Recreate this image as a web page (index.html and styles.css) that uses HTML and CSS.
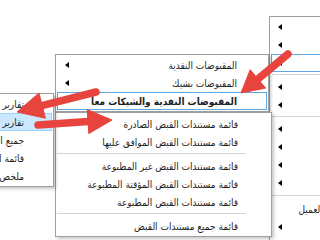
FILE: index.html
```html
<!DOCTYPE html>
<html lang="ar">
<head>
<meta charset="utf-8">
<title>قوائم التقارير</title>
<link rel="stylesheet" href="styles.css">
</head>
<body>
<div class="menu menu-main" dir="rtl">
  <div class="item"><span class="label">سندات</span><span class="sub"></span></div>
  <div class="item"><span class="label">الشيكات</span><span class="sub"></span></div>
  <div class="item focus"><span class="label">المقبوضات</span><span class="sub"></span></div>
  <div class="sep"></div>
  <div class="item"><span class="label">المدفوعات</span><span class="sub"></span></div>
  <div class="item"><span class="label">الحسابات</span><span class="sub"></span></div>
  <div class="sep"></div>
  <div class="item"><span class="label">العملاء</span><span class="sub"></span></div>
  <div class="item"><span class="label">الموردين</span><span class="sub"></span></div>
  <div class="item"><span class="label">الأصناف</span><span class="sub"></span></div>
  <div class="item"><span class="label">المخازن</span><span class="sub"></span></div>
  <div class="sep wide"></div>
  <div class="item"><span class="label">كشف حساب العميل</span></div>
  <div class="item"><span class="label">أخرى</span><span class="sub"></span></div>
</div>

<div class="menu menu-sub1" dir="rtl">
  <div class="item"><span class="label">المقبوضات النقدية</span><span class="sub"></span></div>
  <div class="item"><span class="label">المقبوضات بشيك</span><span class="sub"></span></div>
  <div class="item focus strong"><span class="label">المقبوضات النقدية والشيكات معاً</span></div>
</div>

<div class="menu menu-sub2" dir="rtl">
  <div class="item"><span class="label">قائمة مستندات القبض الصادرة</span></div>
  <div class="item"><span class="label">قائمة مستندات القبض الموافق عليها</span></div>
  <div class="sep"></div>
  <div class="item"><span class="label">قائمة مستندات القبض غير المطبوعة</span></div>
  <div class="item"><span class="label">قائمة مستندات القبض المؤقتة المطبوعة</span></div>
  <div class="item"><span class="label">قائمة مستندات القبض المطبوعة</span></div>
  <div class="sep"></div>
  <div class="item"><span class="label">قائمة جميع مستندات القبض</span></div>
</div>

<div class="menu menu-side" dir="rtl">
  <div class="item"><span class="label">تقارير المقبوضات</span></div>
  <div class="item hot"><span class="label">تقارير مستندات القبض</span></div>
  <div class="item"><span class="label">جميع المقبوضات</span></div>
  <div class="item"><span class="label">قائمة المقبوضات</span></div>
  <div class="item"><span class="label">ملخص المقبوضات</span></div>
</div>

<svg class="arrows" width="320" height="240" viewBox="0 0 320 240">
  <g fill="#e7443e" stroke="#e7443e">
    <line x1="288" y1="54" x2="258" y2="79" stroke-width="7.5" stroke-linecap="round"/>
    <polygon points="265.6,88.1 241,93 250.2,69.7" stroke-width="1" stroke-linejoin="round"/>
    <line x1="96" y1="92" x2="42" y2="105.6" stroke-width="7.5" stroke-linecap="round"/>
    <polygon points="45.4,118.2 17,112 39,93" stroke-width="1" stroke-linejoin="round"/>
    <line x1="38" y1="125" x2="88" y2="121.6" stroke-width="7.5" stroke-linecap="round"/>
    <polygon points="88.8,133.6 112,120 87.2,109.6" stroke-width="1" stroke-linejoin="round"/>
  </g>
</svg>
</body>
</html>
```

FILE: styles.css
```css
html, body {
  margin: 0;
  padding: 0;
}

body {
  position: relative;
  width: 320px;
  height: 240px;
  overflow: hidden;
  background: #ffffff;
  font-family: "DejaVu Sans Condensed", "DejaVu Sans", sans-serif;
  font-size: 10px;
  color: #1e1e1e;
}

.menu {
  position: absolute;
  box-sizing: border-box;
  display: flex;
  flex-direction: column;
  background: #ffffff;
  border: 1px solid #a0a0a0;
  box-shadow: 2px 2px 3px rgba(0, 0, 0, 0.22);
  direction: rtl;
}

.item {
  box-sizing: border-box;
  height: 18px;
  margin: 0 1px;
  display: flex;
  align-items: center;
  white-space: nowrap;
  border: 1px solid transparent;
}

.label {
  flex: none;
}

.sub {
  margin-right: auto;
  width: 0;
  height: 0;
  border-top: 3px solid transparent;
  border-bottom: 3px solid transparent;
  border-right: 4px solid #000000;
}

.sep {
  height: 1px;
  background: #d4d4d4;
  margin-top: 2px;
  margin-bottom: 3px;
}

.sep.wide {
  margin-top: 3px;
  margin-bottom: 4px;
}

.focus {
  border-color: #5ea6e6;
}

.hot {
  background: #cce8ff;
  border-color: #99d1ff;
}

.strong {
  font-weight: bold;
}

/* right-hand main menu (partly off screen) */
.menu-main {
  left: 269px;
  top: 16px;
  width: 138px;
  height: 240px;
  padding-top: 1px;
  z-index: 1;
}
.menu-main .item {
  padding: 0 29px 0 6px;
}
.menu-main .sep {
  margin-left: 2px;
  margin-right: 2px;
}

/* first sub menu */
.menu-sub1 {
  left: 55px;
  top: 54px;
  width: 214px;
  padding: 1px 0;
  z-index: 2;
}
.menu-sub1 .item {
  padding: 0 29px 0 7px;
}

/* second sub menu */
.menu-sub2 {
  left: 55px;
  top: 112px;
  width: 217px;
  padding: 2px 0 1px;
  z-index: 3;
}
.menu-sub2 .item {
  padding: 0 31px 0 6px;
}
.menu-sub2 .sep {
  margin-left: 1px;
  margin-right: 25px;
}

/* left menu (partly off screen) */
.menu-side {
  left: -100px;
  top: 93px;
  width: 154px;
  padding: 1px 0;
  z-index: 4;
}
.menu-side .item {
  padding: 0 27px 0 6px;
}

.arrows {
  position: absolute;
  left: 0;
  top: 0;
  z-index: 10;
}
```
